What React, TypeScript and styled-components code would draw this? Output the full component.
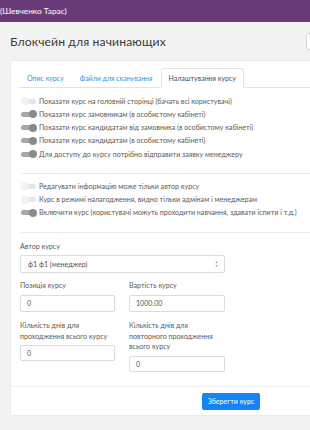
import React from "react";
import styled, { createGlobalStyle } from "styled-components";

const Global = createGlobalStyle`
  html, body { margin: 0; padding: 0; background: #f3f3f4; overflow: hidden; }
  body { font-family: "Lato", "Open Sans", sans-serif; color: #444; }
  * { box-sizing: border-box; }
`;

const TopBar = styled.div`
  height: 22px;
  background: #6a3b79;
  color: #fff;
  font-size: 8.3px;
  line-height: 22px;
  width: 310px;
`;

const Main = styled.div`
  width: 340px;
  padding-left: 10px;
`;

const Header = styled.div`
  height: 38px;
  display: flex;
  align-items: center;
  justify-content: space-between;
`;

const Title = styled.h1`
  margin: 0;
  font-size: 12.2px;
  font-weight: 400;
  color: #3a3a3a;
  letter-spacing: 0.1px;
`;

const HeaderButton = styled.div`
  width: 34px;
  height: 17px;
  background: #fff;
  border: 1px solid #d9d9d9;
  border-radius: 2px;
`;

const Card = styled.div`
  background: #fff;
  border: 1px solid #ebebeb;
  border-right: none;
  border-radius: 2px;
`;

const CardBody = styled.div`
  padding: 7px 0 0 8px;
`;

const Tabs = styled.div`
  display: flex;
  height: 20px;
  border-bottom: 1px solid #e3e3e3;
`;

const Tab = styled.div<{ $active?: boolean }>`
  padding: 0 7px;
  font-size: 7px;
  line-height: 19px;
  color: ${(p) => (p.$active ? "#495057" : "#3d8fe0")};
  background: ${(p) => (p.$active ? "#fff" : "transparent")};
  border: 1px solid ${(p) => (p.$active ? "#e3e3e3" : "transparent")};
  border-bottom: ${(p) => (p.$active ? "1px solid #fff" : "none")};
  border-radius: 2px 2px 0 0;
  margin-bottom: -1px;
  height: 20px;
`;

const Section = styled.div`
  padding: 6.5px 0 0 2px;
`;

const ToggleRow = styled.div`
  display: flex;
  align-items: center;
  height: 13.25px;
  font-size: 7.1px;
  color: #5a5a5a;
  white-space: nowrap;
`;

const Track = styled.span<{ $on?: boolean }>`
  position: relative;
  width: 15px;
  height: 5px;
  border-radius: 3px;
  background: ${(p) => (p.$on ? "#a6a6a6" : "#e6e6e6")};
  margin-right: 3px;
  flex: none;
`;

const Knob = styled.span<{ $on?: boolean }>`
  position: absolute;
  top: -1.5px;
  left: ${(p) => (p.$on ? "8px" : "0px")};
  width: 8px;
  height: 8px;
  border-radius: 50%;
  background: ${(p) => (p.$on ? "#8a8a8a" : "#f2f2f2")};
`;

const Divider = styled.div<{ $after: number }>`
  height: 1px;
  background: #ececec;
  margin: 12px 0 ${(p) => p.$after}px 0;
  width: 300px;
`;

const Form = styled.div`
  padding: 0 0 0 1px;
  width: 206px;
`;

const Label = styled.div`
  font-size: 7.1px;
  line-height: 10.7px;
  color: #5a5a5a;
  margin-bottom: 3px;
  white-space: nowrap;
`;

const Select = styled.div`
  height: 18px;
  border: 1px solid #dcdcdc;
  border-radius: 2px;
  display: flex;
  align-items: center;
  justify-content: space-between;
  padding: 0 6px 0 7px;
  font-size: 7.1px;
  color: #555;
`;

const Arrows = styled.span`
  display: flex;
  flex-direction: column;
  gap: 1px;
  font-size: 3px;
  line-height: 3px;
  color: #666;
`;

const Grid = styled.div`
  display: grid;
  grid-template-columns: 95px 96px;
  column-gap: 14px;
  align-items: start;
`;

const Field = styled.div<{ $gap?: number }>`
  display: flex;
  flex-direction: column;
  margin-top: ${(p) => p.$gap ?? 8}px;
`;

const Input = styled.div<{ $h?: number }>`
  height: ${(p) => p.$h ?? 17}px;
  border: 1px solid #dcdcdc;
  border-radius: 2px;
  font-size: 7.1px;
  color: #555;
  display: flex;
  align-items: center;
  padding-left: 6px;
`;

const Footer = styled.div`
  border-top: 1px solid #eeeeee;
  margin-top: 14px;
  height: 29px;
  display: flex;
  align-items: center;
  padding-left: 191px;
`;

const Button = styled.button`
  width: 58px;
  height: 17px;
  background: #1484f5;
  color: #fff;
  border: none;
  border-radius: 2px;
  font-family: "Lato", "Open Sans", sans-serif;
  font-size: 7.1px;
  padding: 0;
`;

const toggles1 = [
  { on: false, t: "Показати курс на головній сторінці (бачать всі користувачі)" },
  { on: true, t: "Показати курс замовникам (в особистому кабінеті)" },
  { on: true, t: "Показати курс кандидатам від замовника (в особистому кабінеті)" },
  { on: true, t: "Показати курс кандидатам (в особистому кабінеті)" },
  { on: true, t: "Для доступу до курсу потрібно відправити заявку менеджеру" },
];

const toggles2 = [
  { on: false, t: "Редагувати інформацію може тільки автор курсу" },
  { on: false, t: "Курс в режимі налагодження, видно тільки адмінам і менеджерам" },
  { on: true, t: "Включити курс (користувачі можуть проходити навчання, здавати іспити і т.д.)" },
];

const Toggle = ({ on, t }: { on: boolean; t: string }) => (
  <ToggleRow>
    <Track $on={on}>
      <Knob $on={on} />
    </Track>
    {t}
  </ToggleRow>
);

export default function App() {
  return (
    <>
      <Global />
      <TopBar>(Шевченко Тарас)</TopBar>
      <Main>
        <Header>
          <Title>Блокчейн для начинающих</Title>
          <HeaderButton />
        </Header>
        <Card>
          <CardBody>
            <Tabs>
              <Tab>Опис курсу</Tab>
              <Tab>Файли для сканування</Tab>
              <Tab $active>Налаштування курсу</Tab>
            </Tabs>
            <Section>
              {toggles1.map((x) => (
                <Toggle key={x.t} {...x} />
              ))}
              <Divider $after={6} />
              {toggles2.map((x) => (
                <Toggle key={x.t} {...x} />
              ))}
              <Divider $after={9} />
            </Section>
            <Form>
              <Label>Автор курсу</Label>
              <Select>
                <span>ф1 ф1 (менеджер)</span>
                <Arrows>
                  <span>▲</span>
                  <span>▼</span>
                </Arrows>
              </Select>
              <Grid>
                <Field>
                  <Label>Позиція курсу</Label>
                  <Input>0</Input>
                </Field>
                <Field>
                  <Label>Вартість курсу</Label>
                  <Input>1000.00</Input>
                </Field>
                <Field $gap={9}>
                  <Label>
                    Кількість днів для
                    <br />
                    проходження всього курсу
                  </Label>
                  <Input $h={16}>0</Input>
                </Field>
                <Field $gap={9}>
                  <Label>
                    Кількість днів для
                    <br />
                    повторного проходження
                    <br />
                    всього курсу
                  </Label>
                  <Input $h={16}>0</Input>
                </Field>
              </Grid>
            </Form>
          </CardBody>
          <Footer>
            <Button>Зберегти курс</Button>
          </Footer>
        </Card>
      </Main>
    </>
  );
}
